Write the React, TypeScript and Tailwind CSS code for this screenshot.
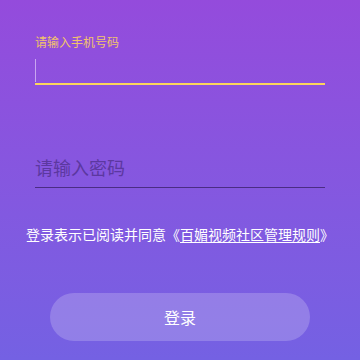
import React, { useState } from 'react';

const FONT = { fontFamily: '"Noto Sans CJK SC", "Noto Sans", sans-serif' };

export default function App() {
  const [phone, setPhone] = useState('');
  const [password, setPassword] = useState('');

  return (
    <div
      className="w-[360px] h-[360px] bg-gradient-to-b from-[#944bdc] to-[#7461e3] overflow-hidden"
      style={FONT}
    >
      <div className="px-[35px] pt-[33px]">
        {/* 手机号 */}
        <div className="text-[12px] leading-[18px] text-[#f2c46a]">请输入手机号码</div>
        <div className="relative mt-[5px] h-[29px] border-b-2 border-[#fcd45c]">
          <span className="absolute left-0 top-[3px] w-[1px] h-[23px] bg-[#c9a6f0]" />
          <input
            value={phone}
            onChange={e => setPhone(e.target.value)}
            className="w-full h-full bg-transparent outline-none text-white text-[18px]"
          />
        </div>

        {/* 密码 */}
        <div className="mt-[67px] h-[36px] pb-[6px] border-b border-[#4b2c84]">
          <input
            type="password"
            value={password}
            onChange={e => setPassword(e.target.value)}
            placeholder="请输入密码"
            className="w-full h-full bg-transparent outline-none text-white text-[18px] placeholder:text-[#5c389f]"
            style={FONT}
          />
        </div>
      </div>

      <p className="mt-[36px] text-center text-[14px] leading-[20px] text-white">
        登录表示已阅读并同意《<span className="underline underline-offset-2">百媚视频社区管理规则</span>》
      </p>

      <div className="px-[50px] mt-[49px]">
        <button className="w-full h-[48px] rounded-[24px] bg-white/20 text-white text-[16px]">
          登录
        </button>
      </div>
    </div>
  );
}
